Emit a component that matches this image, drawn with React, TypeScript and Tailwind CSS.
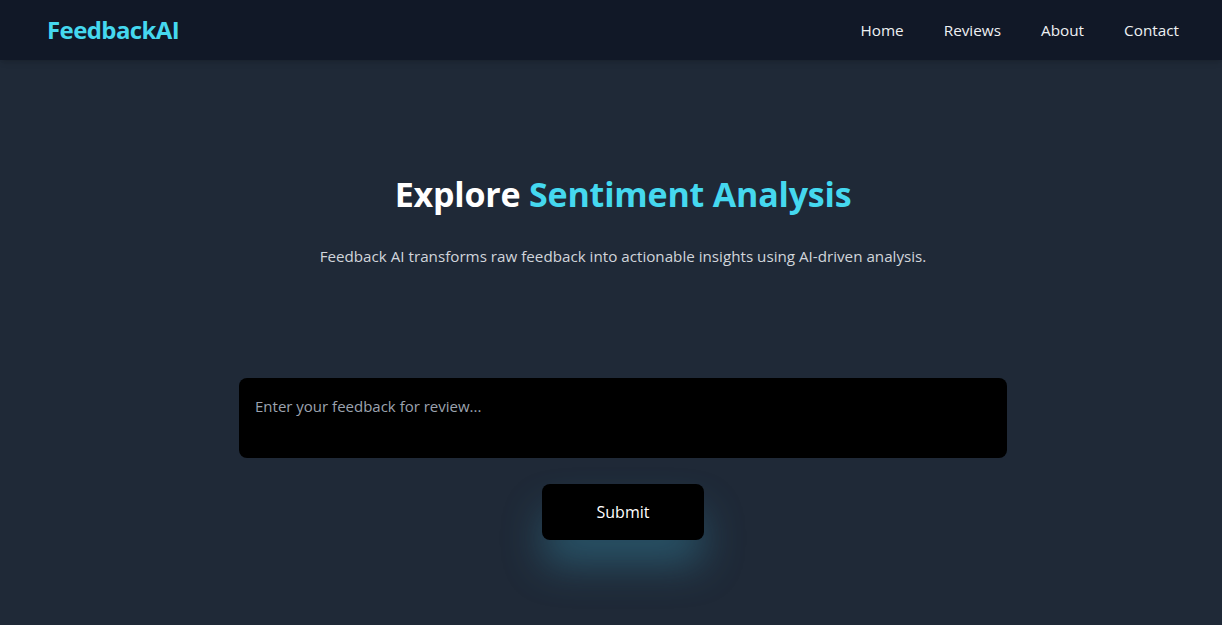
import React from "react";

export default function App() {
  return (
    <div className="min-h-[625px] bg-[#1f2937] text-white" style={{ fontFamily: '"Open Sans", "Noto Sans", sans-serif' }}>
      <header className="h-[60px] bg-[#111827] flex items-center justify-between pl-[47px] pr-[43px] shadow-md">
        <div className="text-[24px] font-bold text-[#45d8ef] tracking-[-0.6px]">FeedbackAI</div>
        <nav className="flex gap-[40px] text-[15.3px] text-[#eef0f3]">
          <a>Home</a>
          <a>Reviews</a>
          <a>About</a>
          <a>Contact</a>
        </nav>
      </header>
      <main className="flex flex-col items-center pt-[114px] pl-[24px]">
        <h1 className="text-[34px] leading-[40px] font-bold tracking-[-0.2px]">
          Explore <span className="text-[#45d8ef]">Sentiment Analysis</span>
        </h1>
        <p className="mt-[30px] text-[15.2px] leading-[24px] text-[#d1d5db]">
          Feedback AI transforms raw feedback into actionable insights using AI-driven analysis.
        </p>
        <textarea
          className="mt-[110px] w-[768px] h-[80px] bg-black rounded-lg px-4 py-[17px] text-[15px] text-white placeholder:text-[#9ca3af] resize-none outline-none"
          placeholder="Enter your feedback for review..."
        />
        <button className="mt-[26px] w-[162px] h-[56px] bg-black rounded-lg text-[16px] text-white shadow-[0_26px_40px_-2px_rgba(56,150,180,0.4)]">
          Submit
        </button>
      </main>
    </div>
  );
}
